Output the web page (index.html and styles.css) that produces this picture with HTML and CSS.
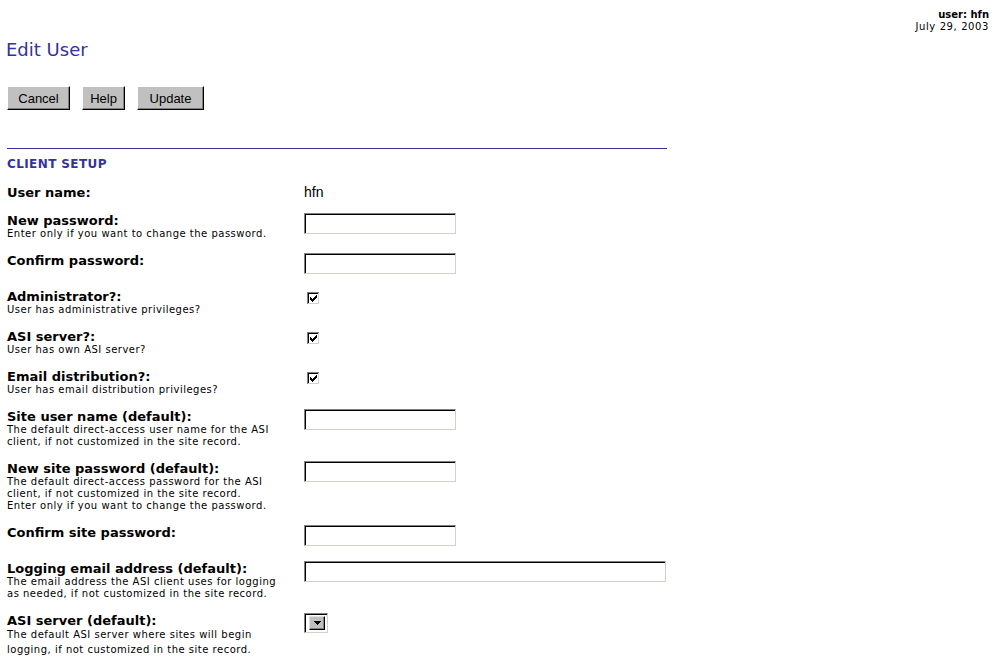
FILE: index.html
```html
<!DOCTYPE html>
<html>
<head>
<meta charset="utf-8">
<title>Edit User</title>
<link rel="stylesheet" href="styles.css">
</head>
<body>
<div class="topinfo">
  <div class="who">user: hfn</div>
  <div class="date">July 29, 2003</div>
</div>
<h1 class="title">Edit User</h1>
<div class="buttons">
  <button class="btn btn-cancel" type="button">Cancel</button>
  <button class="btn btn-help" type="button">Help</button>
  <button class="btn btn-update" type="button">Update</button>
</div>
<div class="rule"></div>
<div class="section">CLIENT SETUP</div>
<div class="form">
  <div class="row">
    <div class="lab"><div class="label">User name:</div></div>
    <div class="val val-text"><span class="plain">hfn</span></div>
  </div>
  <div class="row">
    <div class="lab"><div class="label">New password:</div><div class="hint">Enter only if you want to change the password.</div></div>
    <div class="val"><span class="input"></span></div>
  </div>
  <div class="row">
    <div class="lab"><div class="label">Confirm password:</div></div>
    <div class="val"><span class="input"></span></div>
  </div>
  <div class="row">
    <div class="lab"><div class="label">Administrator?:</div><div class="hint">User has administrative privileges?</div></div>
    <div class="val"><svg class="check" width="13" height="13" viewBox="0 0 13 13" shape-rendering="crispEdges"><rect x="0" y="0" width="13" height="13" fill="#fff"/><rect x="0" y="0" width="12" height="1" fill="#808080"/><rect x="0" y="0" width="1" height="12" fill="#808080"/><rect x="1" y="1" width="10" height="1" fill="#000"/><rect x="1" y="1" width="1" height="10" fill="#000"/><rect x="1" y="11" width="11" height="1" fill="#d4d0c8"/><rect x="11" y="1" width="1" height="11" fill="#d4d0c8"/><rect x="9" y="3" width="1" height="1"/><rect x="8" y="4" width="2" height="1"/><rect x="3" y="5" width="1" height="1"/><rect x="7" y="5" width="3" height="1"/><rect x="3" y="6" width="2" height="1"/><rect x="6" y="6" width="3" height="1"/><rect x="3" y="7" width="5" height="1"/><rect x="4" y="8" width="3" height="1"/><rect x="5" y="9" width="1" height="1"/></svg></div>
  </div>
  <div class="row">
    <div class="lab"><div class="label">ASI server?:</div><div class="hint">User has own ASI server?</div></div>
    <div class="val"><svg class="check" width="13" height="13" viewBox="0 0 13 13" shape-rendering="crispEdges"><rect x="0" y="0" width="13" height="13" fill="#fff"/><rect x="0" y="0" width="12" height="1" fill="#808080"/><rect x="0" y="0" width="1" height="12" fill="#808080"/><rect x="1" y="1" width="10" height="1" fill="#000"/><rect x="1" y="1" width="1" height="10" fill="#000"/><rect x="1" y="11" width="11" height="1" fill="#d4d0c8"/><rect x="11" y="1" width="1" height="11" fill="#d4d0c8"/><rect x="9" y="3" width="1" height="1"/><rect x="8" y="4" width="2" height="1"/><rect x="3" y="5" width="1" height="1"/><rect x="7" y="5" width="3" height="1"/><rect x="3" y="6" width="2" height="1"/><rect x="6" y="6" width="3" height="1"/><rect x="3" y="7" width="5" height="1"/><rect x="4" y="8" width="3" height="1"/><rect x="5" y="9" width="1" height="1"/></svg></div>
  </div>
  <div class="row">
    <div class="lab"><div class="label">Email distribution?:</div><div class="hint">User has email distribution privileges?</div></div>
    <div class="val"><svg class="check" width="13" height="13" viewBox="0 0 13 13" shape-rendering="crispEdges"><rect x="0" y="0" width="13" height="13" fill="#fff"/><rect x="0" y="0" width="12" height="1" fill="#808080"/><rect x="0" y="0" width="1" height="12" fill="#808080"/><rect x="1" y="1" width="10" height="1" fill="#000"/><rect x="1" y="1" width="1" height="10" fill="#000"/><rect x="1" y="11" width="11" height="1" fill="#d4d0c8"/><rect x="11" y="1" width="1" height="11" fill="#d4d0c8"/><rect x="9" y="3" width="1" height="1"/><rect x="8" y="4" width="2" height="1"/><rect x="3" y="5" width="1" height="1"/><rect x="7" y="5" width="3" height="1"/><rect x="3" y="6" width="2" height="1"/><rect x="6" y="6" width="3" height="1"/><rect x="3" y="7" width="5" height="1"/><rect x="4" y="8" width="3" height="1"/><rect x="5" y="9" width="1" height="1"/></svg></div>
  </div>
  <div class="row">
    <div class="lab"><div class="label">Site user name (default):</div><div class="hint">The default direct-access user name for the ASI<br>client, if not customized in the site record.</div></div>
    <div class="val"><span class="input"></span></div>
  </div>
  <div class="row">
    <div class="lab"><div class="label">New site password (default):</div><div class="hint">The default direct-access password for the ASI<br>client, if not customized in the site record.<br>Enter only if you want to change the password.</div></div>
    <div class="val"><span class="input"></span></div>
  </div>
  <div class="row">
    <div class="lab"><div class="label">Confirm site password:</div></div>
    <div class="val"><span class="input"></span></div>
  </div>
  <div class="row">
    <div class="lab"><div class="label">Logging email address (default):</div><div class="hint">The email address the ASI client uses for logging<br>as needed, if not customized in the site record.</div></div>
    <div class="val"><span class="input input-wide"></span></div>
  </div>
  <div class="row row-last">
    <div class="lab"><div class="label">ASI server (default):</div><div class="hint hint-loose">The default ASI server where sites will begin<br>logging, if not customized in the site record.</div></div>
    <div class="val"><span class="select"><span class="select-field"></span><span class="select-btn"><svg width="7" height="4" viewBox="0 0 7 4" shape-rendering="crispEdges"><rect x="0" y="0" width="7" height="1"/><rect x="1" y="1" width="5" height="1"/><rect x="2" y="2" width="3" height="1"/><rect x="3" y="3" width="1" height="1"/></svg></span></span></div>
  </div>
</div>
</body>
</html>
```

FILE: styles.css
```css
html, body {
  margin: 0;
  padding: 0;
  background: #fff;
  overflow: hidden;
}
body {
  padding: 9px 11px 0 7px;
  font-family: "DejaVu Sans", Verdana, sans-serif;
  color: #000;
}
.topinfo {
  text-align: right;
  font-size: 10px;
  line-height: 12px;
}
.who {
  font-weight: bold;
}
.date {
  letter-spacing: 0.6px;
}
.title {
  margin: 6px 0 0 -1px;
  font-size: 18px;
  line-height: 22px;
  font-weight: normal;
  color: #333399;
}
.buttons {
  display: flex;
  gap: 12px;
  margin-top: 25px;
  height: 24px;
}
.btn {
  box-sizing: border-box;
  height: 24px;
  padding: 0;
  margin: 0;
  font-family: "Liberation Sans", Arial, sans-serif;
  font-size: 13px;
  color: #000;
  background: #c0c0c0;
  border-top: 1px solid #fff;
  border-left: 1px solid #fff;
  border-right: 1px solid #000;
  border-bottom: 1px solid #000;
  box-shadow: inset -1px -1px 0 #808080;
}
.btn-cancel { width: 63px; }
.btn-help { width: 43px; }
.btn-update { width: 67px; }
.rule {
  margin-top: 38px;
  width: 660px;
  height: 1px;
  background: #333399;
}
.section {
  margin-top: 9px;
  font-size: 12px;
  line-height: 13px;
  letter-spacing: 0.4px;
  font-weight: bold;
  color: #333399;
}
.form {
  margin-top: 14px;
}
.row {
  display: grid;
  grid-template-columns: 297px auto;
  padding-bottom: 13px;
}
.row-last {
  padding-bottom: 0;
}
.label {
  font-size: 13px;
  line-height: 15px;
  font-weight: bold;
}
.hint {
  font-size: 10px;
  line-height: 12px;
  letter-spacing: 0.5px;
}
.hint-loose {
  line-height: 15px;
  margin-top: -1px;
}
.val {
  min-height: 23px;
  font-size: 13px;
  line-height: 15px;
}
.val-text {
  min-height: 0;
}
.plain {
  font-family: "Liberation Sans", Arial, sans-serif;
  font-size: 14px;
  line-height: 15px;
}
.input {
  display: block;
  box-sizing: border-box;
  width: 152px;
  height: 21px;
  background: #fff;
  border-top: 1px solid #808080;
  border-left: 1px solid #808080;
  border-right: 1px solid #d4d0c8;
  border-bottom: 1px solid #d4d0c8;
  box-shadow: inset 1px 1px 0 #000;
}
.input-wide {
  width: 362px;
}
.check {
  display: block;
  margin: 3px 0 0 3px;
}
.select {
  display: flex;
  box-sizing: border-box;
  width: 24px;
  height: 20px;
  padding: 2px;
  background: #fff;
  border-top: 1px solid #808080;
  border-left: 1px solid #808080;
  border-right: 1px solid #d4d0c8;
  border-bottom: 1px solid #d4d0c8;
  box-shadow: inset 1px 1px 0 #000;
}
.select-field {
  width: 2px;
}
.select-btn {
  flex: 1;
  display: flex;
  align-items: center;
  justify-content: center;
  background: #c0c0c0;
  border-top: 1px solid #e0e0e0;
  border-left: 1px solid #e0e0e0;
  border-right: 1px solid #000;
  border-bottom: 1px solid #000;
  box-shadow: inset -1px -1px 0 #808080;
}
.select-btn svg {
  display: block;
}
```
